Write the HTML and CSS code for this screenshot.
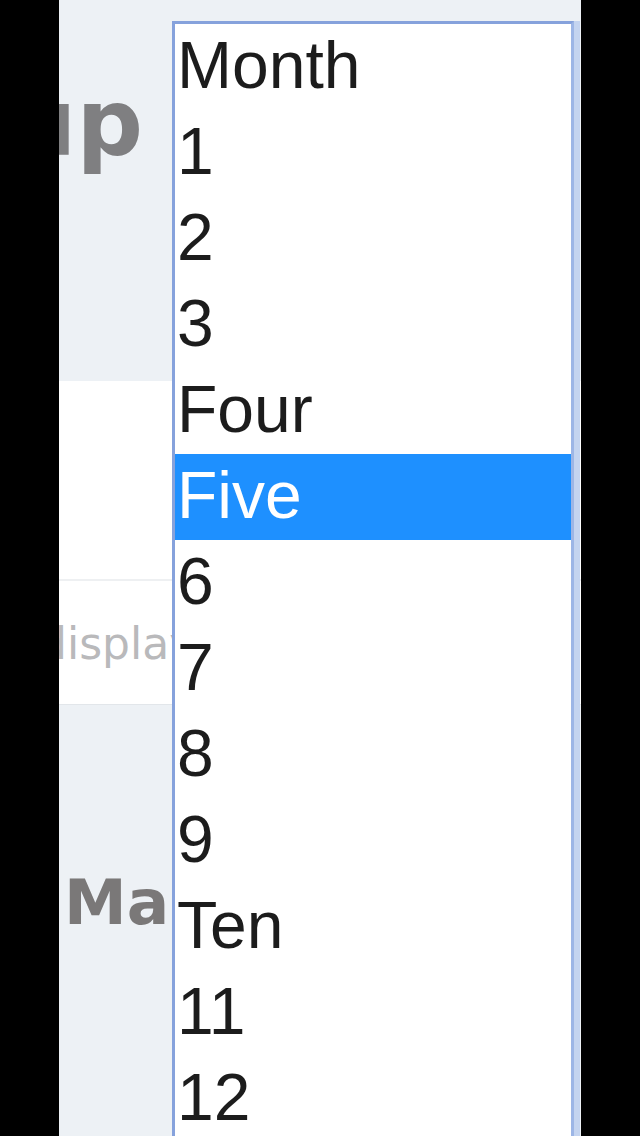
FILE: index.html
```html
<!DOCTYPE html>

<html>
<head>
<title>Sign up</title>
<meta charset="utf-8">
<link rel="stylesheet" href="styles.css">
</head>

<body>
	<div id="screen">
		<div class="header">
			<h1 class="title">Sign up</h1>
		</div>

		<div class="form">
			<div class="blank"></div>
			<div class="field">
				<span class="placeholder">display name</span>
			</div>
		</div>

		<div class="section">
			<h2 class="subtitle">Ma</h2>
		</div>

		<!-- open month picker -->
		<ul class="month-list">
			<li class="option">Month</li>
			<li class="option">1</li>
			<li class="option">2</li>
			<li class="option">3</li>
			<li class="option">Four</li>
			<li class="option selected">Five</li>
			<li class="option">6</li>
			<li class="option">7</li>
			<li class="option">8</li>
			<li class="option">9</li>
			<li class="option">Ten</li>
			<li class="option">11</li>
			<li class="option">12</li>
		</ul>
	</div>
</body>

</html>
```

FILE: styles.css
```css
body
{
	margin: 0;
	background-color: black;
}

#screen
{
	position: relative;
	width: 522px;
	height: 1136px;
	margin: 0 auto;
	overflow: hidden;
	background-color: #edf1f5;
}

.header
{
	height: 381px;
	display: flex;
	justify-content: flex-end;
	width: 84px;
}

.title
{
	margin: 0;
	padding-top: 76px;
	font-family: "DejaVu Sans", sans-serif;
	font-weight: bold;
	font-size: 93px;
	line-height: 95px;
	color: #7f7f81;
	white-space: nowrap;
}

.form
{
	background-color: white;
	border-bottom: 1px solid #e2e6ea;
}

.blank
{
	height: 198px;
	border-bottom: 2px solid #eef0f2;
}

.field
{
	height: 123px;
	display: flex;
	align-items: flex-start;
}

.placeholder
{
	margin-left: -20px;
	padding-top: 35px;
	font-family: "DejaVu Sans", sans-serif;
	font-size: 44px;
	line-height: 56px;
	color: #b9b9bb;
	white-space: nowrap;
}

.section
{
	padding-top: 166px;
	padding-left: 5px;
}

.subtitle
{
	margin: 0;
	font-family: "DejaVu Sans", sans-serif;
	font-weight: bold;
	font-size: 63px;
	line-height: 64px;
	color: #7a7878;
}

/* the dropdown lies over the form */
.month-list
{
	position: absolute;
	top: 21px;
	left: 113px;
	width: 396px;
	height: 1200px;
	margin: 0;
	padding: 0;
	list-style: none;
	background-color: white;
	border-top: 3px solid #86a2dc;
	border-left: 3px solid #86a2dc;
	border-right: 3px solid #9db6e6;
	box-shadow: 6px 0 0 #c4d4f0;
}

.option
{
	height: 86px;
	padding-left: 2px;
	font-family: "Liberation Sans", Arial, sans-serif;
	font-size: 66px;
	line-height: 82px;
	color: #1c1c1c;
	white-space: nowrap;
}

.option.selected
{
	background-color: #1e90ff;
	color: white;
}
```
